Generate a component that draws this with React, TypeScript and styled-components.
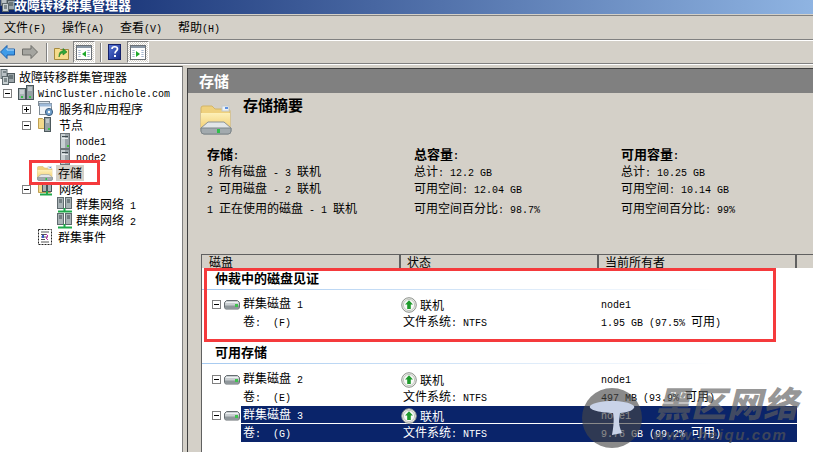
import React from "react";
import styled, { createGlobalStyle } from "styled-components";

const Global = createGlobalStyle`
  html, body { margin: 0; padding: 0; width: 813px; height: 452px; overflow: hidden; background: #d4d0c8; }
  body { font-family: "Noto Sans CJK SC", "Liberation Sans", sans-serif; font-size: 12px; color: #000; }
  * { box-sizing: border-box; }
`;

const Page = styled.div`
  position: relative; width: 813px; height: 452px; overflow: hidden;
  display: flex; flex-direction: column; background: #d4d0c8;
`;
const TitleBar = styled.div`
  height: 14px; flex: none; display: flex; align-items: flex-start; overflow: hidden;
  background: linear-gradient(90deg, #0a246a 0%, #8fb4e2 100%);
  color: #fff; font-weight: 700; font-size: 13px;
`;
const TitleText = styled.span`line-height: 10px;`;
const TitleGlyph = styled.span`flex: none; display: flex; margin: -4px -2px 0 0;`;
const MenuBar = styled.div`
  height: 25px; flex: none; margin-top: 1px; display: flex; align-items: center; gap: 16px; padding: 1px 0 0 4px;
  border-top: 1px solid #808080; border-bottom: 1px solid #808080;
`;
const MenuItem = styled.span`line-height: 16px; white-space: nowrap;`;
const Mono = styled.span`font-family: "Liberation Mono", monospace; font-size: 10px; white-space: pre;`;
const ToolBar = styled.div`
  height: 24px; flex: none; display: flex; align-items: center;
  border-top: 1px solid #fff; border-bottom: 1px solid #808080;
`;
const ToolIcon = styled.span<{ $w: number; $ml: number }>`
  width: ${p => p.$w}px; margin-left: ${p => p.$ml}px; height: 22px; flex: none;
  display: flex; align-items: center; justify-content: center;
`;
const ToolSep = styled.span<{ $ml: number }>`
  width: 2px; height: 19px; flex: none; margin-left: ${p => p.$ml}px;
  border-left: 1px solid #808080; border-right: 1px solid #fff;
`;
const ToggleButton = styled.span<{ $ml: number }>`
  width: 22px; height: 22px; flex: none; margin-left: ${p => p.$ml}px;
  display: flex; align-items: center; justify-content: center;
  border: 1px solid; border-color: #808080 #fff #fff #808080;
  background: repeating-conic-gradient(#fff 0 25%, #d4d0c8 0 50%) 0 0 / 2px 2px;
`;
const Main = styled.div`
  flex: 1; min-height: 0; display: flex; border-top: 1px solid #fff;
`;
const Tree = styled.div`
  width: 183px; flex: none; background: #fff; padding-top: 2px; margin-top: 1px;
  border-top: 1px solid #404040; border-right: 1px solid #808080;
`;
const Row = styled.div<{ $pad: number; $gap?: number }>`
  height: 16px; display: flex; align-items: center; white-space: nowrap;
  padding-left: ${p => p.$pad}px; gap: ${p => p.$gap ?? 4}px;
`;
const ExpanderSlot = styled.span`
  width: 15px; margin-right: -4px; flex: none; display: flex; align-items: center;
`;
const Box = styled.span`
  width: 9px; height: 9px; flex: none; border: 1px solid #808080; background: #fff; position: relative;
  &::before { content: ""; position: absolute; left: 1px; right: 1px; top: 3px; height: 1px; background: #000; }
`;
const BoxPlus = styled(Box)`
  &::after { content: ""; position: absolute; top: 1px; bottom: 1px; left: 3px; width: 1px; background: #000; }
`;
const TreeLabel = styled.span<{ $selected?: boolean }>`
  line-height: 16px; margin-left: ${p => (p.$selected ? -2 : 0)}px; padding: 0 ${p => (p.$selected ? 2 : 0)}px;
  background: ${p => (p.$selected ? "#d4d0c8" : "transparent")};
`;
const Gutter = styled.div`width: 4px; flex: none;`;
const Content = styled.div`
  flex: 1; min-width: 0; display: flex; flex-direction: column; margin-top: 3px;
  border-left: 1px solid #404040; border-top: 1px solid #404040;
`;
const Banner = styled.div`
  height: 24px; flex: none; background: #808080; color: #fff; font-weight: 700; font-size: 15px;
  line-height: 24px; padding-left: 11px;
`;
const SummaryHead = styled.div`
  height: 52px; flex: none; display: flex; padding: 2px 0 0 12px; gap: 11px;
`;
const SummaryIcon = styled.span`flex: none; display: flex; height: 32px; margin-top: 8px;`;
const SummaryTitle = styled.div`font-weight: 700; font-size: 15px; line-height: 20px;`;
const Columns = styled.div`
  flex: none; height: 109px; display: grid; grid-template-columns: 207px 207px 1fr; padding-left: 19px;
`;
const Col = styled.div`display: flex; flex-direction: column;`;
const ColHead = styled.div`font-weight: 700; font-size: 13px; line-height: 17px; height: 17px;`;
const ColLine = styled.div<{ $tall?: boolean }>`
  line-height: 17px; height: ${p => (p.$tall ? 23 : 17)}px; white-space: nowrap;
  padding-top: ${p => (p.$tall ? 3 : 0)}px;
`;
const List = styled.div`
  flex: 1; min-height: 0; margin-left: 13px; display: flex; flex-direction: column;
  border-left: 1px solid #606060; border-top: 1px solid #606060; background: #fff;
`;
const ListHead = styled.div`
  height: 13px; flex: none; display: grid; grid-template-columns: 199px 198px 198px 1fr;
  background: #d4d0c8;
`;
const HeadCell = styled.div`
  padding-left: 6px; line-height: 13px; border-right: 2px solid #606060; height: 13px;
  &:first-child { padding-left: 7px; }
  &:last-child { border-right: 0; }
`;
const GroupTitle = styled.div`
  height: 22px; font-weight: 700; font-size: 13px; padding-left: 13px; line-height: 20px;
  border-bottom: 1px solid transparent; white-space: nowrap;
  border-image: linear-gradient(90deg, #a6caf0, #ffffff 85%) 1;
`;
const Disk = styled.div<{ $selected?: boolean }>`
  display: flex; color: ${p => (p.$selected ? "#fff" : "#000")};
`;
const DiskGutter = styled.div`
  width: 39px; flex: none; height: 18px; display: flex; align-items: center; padding-left: 10px; gap: 3px;
`;
const DiskBody = styled.div<{ $selected?: boolean }>`
  width: 556px; flex: none;
  background: ${p => (p.$selected ? "#0a246a" : "transparent")};
`;
const DiskLine = styled.div<{ $selected?: boolean }>`
  height: 18px; display: grid; grid-template-columns: 160px 198px 1fr; padding: 0 0 1px 2px;
  align-items: center; white-space: nowrap; line-height: 16px; color: inherit;
  border-bottom: 1px solid ${p => (p.$selected ? "#fff" : "transparent")};
`;
const StatusCell = styled.div`display: flex; align-items: center; gap: 3px; margin-left: -2px;`;
const Spacer = styled.div<{ $h: number }>`height: ${p => p.$h}px; flex: none;`;

const RedFrame = styled.div<{ $x: number; $y: number; $w: number; $h: number }>`
  position: absolute; left: ${p => p.$x}px; top: ${p => p.$y}px; width: ${p => p.$w}px; height: ${p => p.$h}px;
  border: 3px solid #f53a3c; pointer-events: none;
`;
const Watermark = styled.div`
  position: absolute; left: 581px; top: 387px; width: 225px; height: 65px; pointer-events: none;
`;
const WmCircle = styled.svg`position: absolute; left: 0; top: 0;`;
const WmText = styled.div`
  position: absolute; left: 74px; top: -8px; font-family: "Noto Sans CJK SC", sans-serif; font-weight: 900;
  font-size: 35px; line-height: 46px; letter-spacing: 1px; font-style: italic; white-space: nowrap;
  color: rgba(95, 95, 95, 0.68);
`;
const WmUrl = styled.div`
  position: absolute; left: 72px; top: 38px; font-family: "Liberation Sans", sans-serif; font-weight: 700;
  font-size: 15px; line-height: 20px; letter-spacing: 1.6px; font-style: italic; white-space: nowrap;
  color: rgba(85, 85, 85, 0.7);
`;

const Server = () => (
  <svg width="10" height="16" viewBox="0 0 10 16">
    <rect x="0.5" y="0.5" width="9" height="15" fill="#9aa4a8" stroke="#6d7579" />
    <rect x="1" y="1" width="4" height="14" fill="#c8d0d2" />
    <rect x="2" y="3" width="6" height="1" fill="#3f4a4e" />
    <rect x="2" y="5" width="6" height="1" fill="#e8eced" />
    <rect x="7" y="12" width="2" height="2" fill="#3fc23f" />
  </svg>
);
const Cluster = () => (
  <svg width="16" height="16" viewBox="0 0 16 16">
    <rect x="0.5" y="0.5" width="6" height="11" fill="#a9b3b6" stroke="#5f6a6e" />
    <rect x="8.5" y="0.5" width="6" height="11" fill="#a9b3b6" stroke="#5f6a6e" />
    <path d="M2 3h3M2 5h3M10 3h3M10 5h3" stroke="#3f4a4e" />
    <path d="M1 14.500h14" stroke="#1fa84a" strokeWidth="2" />
    <path d="M7.500 11v3" stroke="#1fa84a" strokeWidth="2" />
  </svg>
);
const FolderDisk = ({ size = 16 }: { size?: number }) => (
  <svg width={size} height={size} viewBox="0 0 32 32">
    <defs>
      <linearGradient id="fld" x1="0" y1="0" x2="0" y2="1">
        <stop offset="0" stopColor="#fdf0b8" />
        <stop offset="1" stopColor="#f3d27a" />
      </linearGradient>
    </defs>
    <path d="M1 5a2 2 0 0 1 2-2h9l3 3h13a2 2 0 0 1 2 2v18H1z" fill="#efd17e" stroke="#d3b567" />
    <path d="M1 10h29v14H1z" fill="url(#fld)" />
    <rect x="22" y="3" width="7" height="5" fill="#eef3f6" stroke="#c4c9cc" />
    <rect x="25" y="4" width="3" height="2" fill="#5b8fe0" />
    <path d="M8 19h16l7 6v3a3 3 0 0 1-3 3H4a3 3 0 0 1-3-3v-3z" fill="#e2e6e8" stroke="#8a9296" />
    <path d="M1 25h30v3a3 3 0 0 1-3 3H4a3 3 0 0 1-3-3z" fill="#a2aaae" stroke="#7d8589" />
    <rect x="17" y="26" width="3" height="4" fill="#2fbf4a" />
  </svg>
);
const ClusterRoot = () => (
  <svg width="16" height="16" viewBox="0 0 16 16">
    <rect x="1" y="0.5" width="6" height="9" fill="#b8c0c4" stroke="#5f6a6e" />
    <rect x="7.5" y="4.5" width="7" height="9" fill="#9aa4a8" stroke="#4f5a5e" />
    <rect x="2.5" y="7.5" width="6" height="8" fill="#c8d0d2" stroke="#5f6a6e" />
    <path d="M3 3h3M9 7h4M9 9h4M4 10h3M4 12h3" stroke="#39464a" />
  </svg>
);
const ClusterNode = () => (
  <svg width="16" height="16" viewBox="0 0 16 16">
    <rect x="0.5" y="3.5" width="7" height="11" fill="#a9b3b6" stroke="#49565a" />
    <rect x="8.500" y="0.5" width="7" height="14" fill="#95a0a4" stroke="#49565a" />
    <path d="M2 6h4M2 8h4M10 3h4M10 5h4" stroke="#e6ecee" />
    <rect x="3" y="11" width="2" height="2" fill="#37c24a" />
    <rect x="11" y="11" width="2" height="2" fill="#37c24a" />
  </svg>
);
const Services = () => (
  <svg width="16" height="16" viewBox="0 0 16 16">
    <rect x="0.5" y="0.5" width="11" height="4" fill="#dce6ee" stroke="#7e8a94" />
    <rect x="1.5" y="2.500" width="12" height="11" fill="#f0f4f8" stroke="#7e8a94" />
    <rect x="1.5" y="2.500" width="12" height="3" fill="#9db9d8" />
    <circle cx="11" cy="11" r="3.600" fill="#6c9cc8" stroke="#3f5f80" />
    <circle cx="11" cy="11" r="1.200" fill="#fff" />
  </svg>
);
const Nodes = () => (
  <svg width="16" height="16" viewBox="0 0 16 16">
    <path d="M0.5 1.5h4l1 1h7v9h-12z" fill="#f3d98a" stroke="#bf9f52" />
    <rect x="6.5" y="0.5" width="6" height="14" fill="#97a2a6" stroke="#4d595d" />
    <path d="M8 3h3M8 5h3" stroke="#e6ecee" />
    <rect x="10" y="11" width="2" height="2" fill="#37c24a" />
  </svg>
);
const NetFolder = () => (
  <svg width="16" height="16" viewBox="0 0 16 16">
    <path d="M0.5 1.5h4l1 1h7v9h-12z" fill="#f3d98a" stroke="#bf9f52" />
    <rect x="4.5" y="1.500" width="4" height="9" fill="#a9b3b6" stroke="#49565a" />
    <rect x="9.5" y="1.500" width="4" height="9" fill="#a9b3b6" stroke="#49565a" />
    <path d="M2 13.500h12" stroke="#1fa84a" strokeWidth="2" />
    <path d="M9 10v4" stroke="#1fa84a" strokeWidth="2" />
  </svg>
);
const EventLog = () => (
  <svg width="16" height="16" viewBox="0 0 16 16">
    <rect x="1.5" y="0.5" width="13" height="15" fill="#fff" stroke="#222" strokeDasharray="2 1" />
    <path d="M4 3h8M4 5.500h5M4 8h7M4 10.500h4M4 13h8" stroke="#555" />
    <path d="M9 5l2 2-2 2 2 2" stroke="#c02ab0" fill="none" />
    <rect x="5" y="6" width="2" height="3" fill="#3a55c8" />
  </svg>
);
const DiskIcon = () => (
  <svg width="16" height="11" viewBox="0 0 16 11">
    <path d="M2.5 1.500h11l2 2v5l-1 1.500h-13l-1-1.500v-5z" fill="#c9ced1" stroke="#666d71" />
    <path d="M1 6.500h14v2l-1 1.500H2l-1-1.500z" fill="#8f979b" />
    <rect x="2" y="3" width="12" height="1" fill="#eef1f2" />
    <rect x="11" y="5" width="3" height="3" fill="#3ec24e" />
  </svg>
);
const Online = () => (
  <svg width="16" height="16" viewBox="0 0 16 16">
    <circle cx="8" cy="8" r="7.300" fill="#eceee9" stroke="#8d928c" />
    <circle cx="8" cy="8" r="5.600" fill="#f9faf8" stroke="#c2c6c0" />
    <path d="M8 3.200l4 4.300H9.800V12H6.200V7.500H4z" fill="#1f9a2c" />
  </svg>
);
const Back = () => (
  <svg width="15" height="14" viewBox="0 0 15 14">
    <path d="M7 .5L.5 7 7 13.500V10h7.500V4H7z" fill="#3f9be8" stroke="#1f5fa8" />
    <path d="M7 3v2h7" stroke="#bfe2fb" fill="none" />
  </svg>
);
const Forward = () => (
  <svg width="16" height="14" viewBox="0 0 16 14">
    <path d="M9 .5L15.500 7 9 13.500V10H.5V4H9z" fill="#a5a5a0" stroke="#6d6d68" />
  </svg>
);
const UpFolder = () => (
  <svg width="15" height="15" viewBox="0 0 15 15">
    <path d="M.5 3.500h5l1 1h8v10H.5z" fill="#f5dc8c" stroke="#a68a3e" />
    <path d="M5 12c0-4 1-6 4-6V3.500L13 7 9 10V8c-2 0-3 1-4 4z" fill="#2fa83a" stroke="#1c7a25" strokeWidth=".6" />
  </svg>
);
const PaneIcon = ({ right = false }: { right?: boolean }) => (
  <svg width="16" height="15" viewBox="0 0 16 15">
    <rect x=".5" y=".5" width="15" height="14" fill="#fff" stroke="#6a7076" />
    <rect x="1" y="1" width="14" height="2" fill="#8a97a5" />
    <path d="M3 5v8M4 5v8" stroke="#8aa0c0" strokeDasharray="1 1" />
    <path d="M12 5v8M13 5v8" stroke="#8aa0c0" strokeDasharray="1 1" />
    <path d={right ? "M6 6l4 3-4 3z" : "M10 6L6 9l4 3z"} fill="#1fa82c" />
  </svg>
);
const Help = () => (
  <svg width="13" height="16" viewBox="0 0 13 16">
    <defs>
      <linearGradient id="hb" x1="0" y1="0" x2="1" y2="1">
        <stop offset="0" stopColor="#5a78d8" />
        <stop offset="1" stopColor="#14298a" />
      </linearGradient>
    </defs>
    <rect x=".5" y=".5" width="12" height="15" fill="url(#hb)" stroke="#14206a" />
    <path d="M4 5c0-3 5.500-3 5.500 0 0 2-2.500 2-2.500 4.500" stroke="#fff" strokeWidth="1.700" fill="none" />
    <rect x="6" y="11" width="2" height="2" fill="#fff" />
  </svg>
);

const DiskRow = ({ name, vol, owner, size, selected }: { name: string; vol: string; owner: string; size: string; selected?: boolean }) => (
  <Disk $selected={selected}>
    <DiskGutter><Box /><DiskIcon /></DiskGutter>
    <DiskBody $selected={selected}>
      <DiskLine $selected={selected}>
        <div>群集磁盘<Mono> {name}</Mono></div>
        <StatusCell><Online />联机</StatusCell>
        <div><Mono>{owner}</Mono></div>
      </DiskLine>
      <DiskLine>
        <div>卷<Mono>:  {vol}</Mono></div>
        <div>文件系统<Mono>: NTFS</Mono></div>
        <div><Mono>{size} </Mono>可用<Mono>)</Mono></div>
      </DiskLine>
    </DiskBody>
  </Disk>
);

export default function App() {
  return (
    <Page>
      <Global />
      <TitleBar><TitleGlyph><ClusterRoot /></TitleGlyph><TitleText>故障转移群集管理器</TitleText></TitleBar>
      <MenuBar>
        <MenuItem>文件<Mono>(F)</Mono></MenuItem>
        <MenuItem>操作<Mono>(A)</Mono></MenuItem>
        <MenuItem>查看<Mono>(V)</Mono></MenuItem>
        <MenuItem>帮助<Mono>(H)</Mono></MenuItem>
      </MenuBar>
      <ToolBar>
        <ToolIcon $w={15} $ml={0}><Back /></ToolIcon>
        <ToolIcon $w={16} $ml={7}><Forward /></ToolIcon>
        <ToolSep $ml={8} />
        <ToolIcon $w={15} $ml={6}><UpFolder /></ToolIcon>
        <ToggleButton $ml={4}><PaneIcon /></ToggleButton>
        <ToolSep $ml={5} />
        <ToolIcon $w={13} $ml={6}><Help /></ToolIcon>
        <ToggleButton $ml={6}><PaneIcon right /></ToggleButton>
      </ToolBar>
      <Main>
        <Tree>
          <Row $pad={0} $gap={3}><ClusterRoot /><TreeLabel>故障转移群集管理器</TreeLabel></Row>
          <Row $pad={3}><ExpanderSlot><Box /></ExpanderSlot><ClusterNode /><TreeLabel><Mono>WinCluster.nichole.com</Mono></TreeLabel></Row>
          <Row $pad={22} $gap={5}><ExpanderSlot><BoxPlus /></ExpanderSlot><Services /><TreeLabel>服务和应用程序</TreeLabel></Row>
          <Row $pad={22} $gap={5}><ExpanderSlot><Box /></ExpanderSlot><Nodes /><TreeLabel>节点</TreeLabel></Row>
          <Row $pad={60} $gap={6}><Server /><TreeLabel><Mono>node1</Mono></TreeLabel></Row>
          <Row $pad={60} $gap={6}><Server /><TreeLabel><Mono>node2</Mono></TreeLabel></Row>
          <Row $pad={37} $gap={5}><FolderDisk /><TreeLabel $selected>存储</TreeLabel></Row>
          <Row $pad={22} $gap={5}><ExpanderSlot><Box /></ExpanderSlot><NetFolder /><TreeLabel>网络</TreeLabel></Row>
          <Row $pad={57} $gap={3}><Cluster /><TreeLabel>群集网络<Mono> 1</Mono></TreeLabel></Row>
          <Row $pad={57} $gap={3}><Cluster /><TreeLabel>群集网络<Mono> 2</Mono></TreeLabel></Row>
          <Row $pad={37} $gap={5}><EventLog /><TreeLabel>群集事件</TreeLabel></Row>
        </Tree>
        <Gutter />
        <Content>
          <Banner>存储</Banner>
          <SummaryHead>
            <SummaryIcon><FolderDisk size={32} /></SummaryIcon>
            <SummaryTitle>存储摘要</SummaryTitle>
          </SummaryHead>
          <Columns>
            <Col>
              <ColHead>存储<Mono>:</Mono></ColHead>
              <ColLine><Mono>3 </Mono>所有磁盘<Mono> - 3 </Mono>联机</ColLine>
              <ColLine><Mono>2 </Mono>可用磁盘<Mono> - 2 </Mono>联机</ColLine>
              <ColLine $tall><Mono>1 </Mono>正在使用的磁盘<Mono> - 1 </Mono>联机</ColLine>
            </Col>
            <Col>
              <ColHead>总容量<Mono>:</Mono></ColHead>
              <ColLine>总计<Mono>: 12.2 GB</Mono></ColLine>
              <ColLine>可用空间<Mono>: 12.04 GB</Mono></ColLine>
              <ColLine $tall>可用空间百分比<Mono>: 98.7%</Mono></ColLine>
            </Col>
            <Col>
              <ColHead>可用容量<Mono>:</Mono></ColHead>
              <ColLine>总计<Mono>: 10.25 GB</Mono></ColLine>
              <ColLine>可用空间<Mono>: 10.14 GB</Mono></ColLine>
              <ColLine $tall>可用空间百分比<Mono>: 99%</Mono></ColLine>
            </Col>
          </Columns>
          <List>
            <ListHead>
              <HeadCell>磁盘</HeadCell>
              <HeadCell>状态</HeadCell>
              <HeadCell>当前所有者</HeadCell>
              <HeadCell />
            </ListHead>
            <GroupTitle>仲裁中的磁盘见证</GroupTitle>
            <Spacer $h={5} />
            <DiskRow name="1" vol="(F)" owner="node1" size="1.95 GB (97.5%" />
            <Spacer $h={11} />
            <GroupTitle>可用存储</GroupTitle>
            <Spacer $h={6} />
            <DiskRow name="2" vol="(E)" owner="node1" size="497 MB (93.9%" />
            <DiskRow selected name="3" vol="(G)" owner="node1" size="9.76 GB (99.2%" />
          </List>
        </Content>
      </Main>
      <RedFrame $x={29} $y={160} $w={71} $h={25} />
      <RedFrame $x={204} $y={268} $w={572} $h={74} />
      <Watermark>
        <WmCircle width="62" height="62" viewBox="0 0 62 62">
          <circle cx="31" cy="31" r="30" fill="rgba(70,70,70,0.63)" />
          <path d="M9 19c6-6 36-7 44 0 2 3-6 7-14 7l-1 8c0 6 3 12 3 12l-10 2s3-14 1-22C21 26 7 23 9 19z" fill="#c9d3e8" />
        </WmCircle>
        <WmText>黑区网络</WmText>
        <WmUrl>www.heiqu.com</WmUrl>
      </Watermark>
    </Page>
  );
}
